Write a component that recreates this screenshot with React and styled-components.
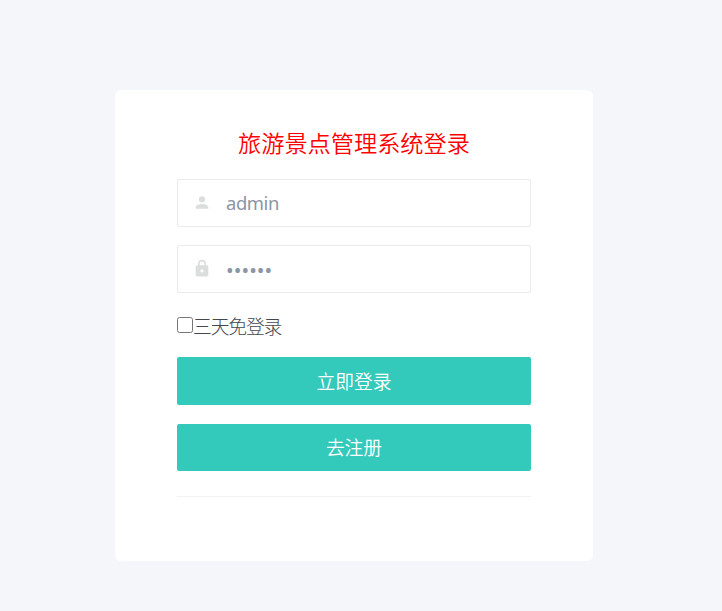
import React, { useState } from "react";
import styled, { createGlobalStyle } from "styled-components";

const GlobalStyle = createGlobalStyle`
  *, *::before, *::after { box-sizing: border-box; }
  body {
    margin: 0;
    background: #f4f6fa;
    color: #4d5259;
    font-family: "Noto Sans CJK SC", sans-serif;
    font-weight: 350;
  }
`;

const Page = styled.main`
  width: 722px;
  height: 611px;
  padding: 90px 129px 50px 115px;
  overflow: hidden;
`;

const Card = styled.form`
  height: 471px;
  padding: 38px 62px 0;
  background: #fff;
  border-radius: 6px;
`;

const Title = styled.h1`
  height: 30px;
  margin: 0 0 21px;
  color: #f00;
  font-size: 23.2px;
  font-weight: 350;
  line-height: 29px;
  text-align: center;
  white-space: nowrap;
`;

const Field = styled.label`
  display: flex;
  align-items: center;
  height: 48px;
  margin-bottom: ${(p) => p.$gap}px;
  padding-left: 14px;
  border: 1px solid #ebebeb;
  border-radius: 2px;
`;

const Icon = styled.svg`
  flex: none;
  width: 20px;
  height: 19px;
  margin: 0 0 2px;
  fill: #dcdddd;
`;

const Input = styled.input`
  flex: 1;
  min-width: 0;
  height: 46px;
  padding: ${(p) => p.$pad};
  border: 0;
  outline: 0;
  background: transparent;
  color: #8b95a5;
  font-family: "Noto Sans", sans-serif;
  font-size: ${(p) => p.$size}px;
  font-weight: 400;
  letter-spacing: ${(p) => p.$spacing}px;
`;

const Remember = styled.label`
  display: flex;
  align-items: center;
  height: 28px;
  margin-bottom: 18px;
  color: #43484f;
  font-size: 18.75px;
  font-weight: 300;
  letter-spacing: -1.1px;
`;

const Checkbox = styled.input`
  width: 16px;
  height: 16px;
  margin: 0 0 1px;
`;

const Button = styled.button`
  display: block;
  width: 100%;
  height: ${(p) => p.$height}px;
  margin: 0 0 ${(p) => p.$gap}px;
  padding: 0 0 1px;
  border: 0;
  border-radius: 2px;
  background: #33cabb;
  color: #fff;
  font-family: "Noto Sans CJK SC", sans-serif;
  font-size: 18.75px;
  font-weight: 350;
  line-height: 46px;
`;

const Divider = styled.hr`
  height: 1px;
  margin: 0;
  border: 0;
  background: #f3f3f4;
`;

export default function App() {
  const [name, setName] = useState("admin");
  const [password, setPassword] = useState("123456");
  return (
    <>
      <GlobalStyle />
      <Page>
        <Card onSubmit={(e) => e.preventDefault()}>
          <Title>旅游景点管理系统登录</Title>
          <Field $gap={18}>
            <Icon viewBox="0 0 24 24">
              <path d="M12 4a4 4 0 1 1 0 8 4 4 0 0 1 0-8m0 10c4.42 0 8 1.79 8 4v2H4v-2c0-2.21 3.58-4 8-4" />
            </Icon>
            <Input
              $size={18.4}
              $spacing={-0.4}
              $pad="0 14px 2px 14px"
              value={name}
              onChange={(e) => setName(e.target.value)}
            />
          </Field>
          <Field $gap={18}>
            <Icon viewBox="0 0 24 24">
              <path d="M12 17a2 2 0 1 0 0-4 2 2 0 0 0 0 4m6-9a2 2 0 0 1 2 2v10a2 2 0 0 1-2 2H6a2 2 0 0 1-2-2V10a2 2 0 0 1 2-2h1V6a5 5 0 0 1 10 0v2h1m-6-5a3 3 0 0 0-3 3v2h6V6a3 3 0 0 0-3-3" />
            </Icon>
            <Input
              $size={20.4}
              $spacing={0.05}
              $pad="2px 14px 0 14px"
              type="password"
              value={password}
              onChange={(e) => setPassword(e.target.value)}
            />
          </Field>
          <Remember>
            <Checkbox type="checkbox" />
            三天免登录
          </Remember>
          <Button type="submit" $height={48} $gap={19}>立即登录</Button>
          <Button type="button" $height={47} $gap={25}>去注册</Button>
          <Divider />
        </Card>
      </Page>
    </>
  );
}
